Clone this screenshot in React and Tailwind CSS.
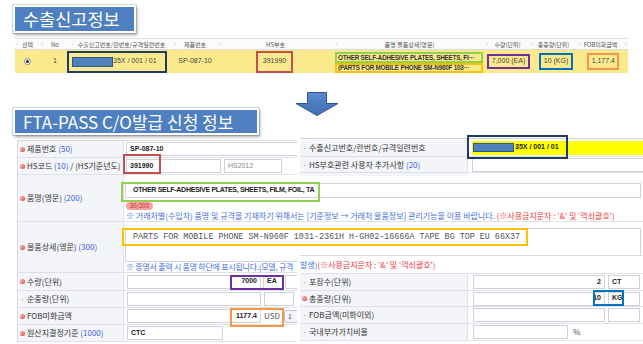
import React from 'react';

const LAT = "font-['Liberation_Sans',sans-serif]";

function TitleBox({ className = '', children }) {
  return (
    <div className={`flex items-center pl-[8px] bg-[#4e7fc0] text-white leading-none border-2 border-white shadow-[1px_2px_3px_rgba(0,0,0,0.35),0_0_0_1px_#d5dbe4] ${className}`}>
      {children}
    </div>
  );
}

function DownArrow() {
  return (
    <svg className="absolute left-[295px] top-[92px]" width="44" height="24" viewBox="0 0 44 24">
      <defs>
        <linearGradient id="ag" x1="0" y1="0" x2="0" y2="1">
          <stop offset="0" stopColor="#5a8ad0" />
          <stop offset="1" stopColor="#3f6fb0" />
        </linearGradient>
      </defs>
      <path d="M12.5 0.5 H31.5 V11.5 H43 L22 23.5 L1 11.5 H12.5 Z" fill="url(#ag)" stroke="#2d5690" strokeWidth="1" />
    </svg>
  );
}

function HeadCell({ w, children }) {
  return (
    <div className={`relative flex items-center justify-center ${w}`}>
      <span className="absolute left-[0px] text-[#b0b0b0] text-[8px] leading-none">·</span>
      <span className="whitespace-nowrap">{children}</span>
    </div>
  );
}

function ExportTable() {
  return (
    <div className="mt-[5px] ml-[15px] w-[613px]">
      <div className="flex h-[12px] border-t border-b border-[#dcdcdc] bg-[#fbfbfb] text-[6px] text-[#555]">
        <HeadCell w="w-[25px]">선택</HeadCell>
        <HeadCell w="w-[30px]">No</HeadCell>
        <HeadCell w="w-[103px]">수출신고번호/란번호/규격일련번호</HeadCell>
        <HeadCell w="w-[44px]">제품번호</HeadCell>
        <HeadCell w="w-[117px]">HS부호</HeadCell>
        <HeadCell w="w-[151px]">품명.물품상세(영문)</HeadCell>
        <HeadCell w="w-[45px]">수량(단위)</HeadCell>
        <HeadCell w="w-[47px]">총중량(단위)</HeadCell>
        <HeadCell w="w-[47px]">FOB미화금액</HeadCell>
        <HeadCell w="w-[4px]"></HeadCell>
      </div>
      <div className={`flex h-[23px] bg-[#fbea8d] text-[7px] text-[#444] ${LAT}`}>
        <div className="w-[25px] flex items-center justify-center">
          <div className="w-[7px] h-[7px] rounded-full border border-[#888] bg-white flex items-center justify-center">
            <div className="w-[3px] h-[3px] rounded-full bg-[#222]" />
          </div>
        </div>
        <div className="w-[30px] flex items-center justify-center">1</div>
        <div className="w-[103px] flex items-center">
          <div className="ml-[-3px] w-[100px] h-[22px] border-2 border-[#1f3a68] flex items-center pl-[3px]">
            <div className="w-[41px] h-[10px] bg-[#4f81bd] border border-[#30578a]" />
            <span className="whitespace-nowrap">35X / 001 / 01</span>
          </div>
        </div>
        <div className="w-[44px] flex items-center justify-center">SP-087-10</div>
        <div className="w-[117px] flex items-center">
          <div className="ml-[39px] w-[37px] h-[22px] border-2 border-[#c0504d] flex items-center justify-center">391990</div>
        </div>
        <div className="w-[151px] flex flex-col pt-[2px] font-bold text-[6.3px] text-[#333] tracking-[-0.2px]">
          <div className="ml-[1px] w-[148px] h-[11px] border-2 border-[#92d050] flex items-center pl-[1px] whitespace-nowrap overflow-hidden">OTHER SELF-ADHESIVE PLATES, SHEETS, FI···</div>
          <div className="ml-[1px] w-[148px] h-[11px] border-2 border-[#ffc000] flex items-center pl-[1px] whitespace-nowrap overflow-hidden">(PARTS FOR MOBILE PHONE SM-N960F 103···</div>
        </div>
        <div className="w-[45px] flex items-center">
          <div className="ml-[2px] w-[43px] h-[15px] border-2 border-[#7030a0] flex items-center justify-center whitespace-nowrap">7,000 (EA)</div>
        </div>
        <div className="w-[47px] flex items-center">
          <div className="ml-[9px] w-[34px] h-[17px] border-2 border-[#0070c0] flex items-center justify-center whitespace-nowrap">10 (KG)</div>
        </div>
        <div className="w-[47px] flex items-center">
          <div className="ml-[10px] w-[32px] h-[17px] border-2 border-[#f79646] flex items-center justify-end pr-[2px]">1,177.4</div>
        </div>
        <div className="w-[4px]" />
      </div>
    </div>
  );
}

function Bullet({ req }) {
  if (req) {
    return <span className="inline-block w-[5px] h-[5px] mr-[2px] shrink-0 rounded-full bg-[radial-gradient(circle_at_35%_35%,#f8b0b0,#d8393b)]" />;
  }
  return <span className="inline-block w-[5px] mr-[2px] shrink-0 text-center text-[#999]">·</span>;
}

function Num({ children }) {
  return <span className="text-[#3b5ce0]">{children}</span>;
}

function Field({ className = '', children }) {
  return (
    <div className={`h-[14px] shrink-0 border border-[#cdd2d9] bg-white flex items-center px-[3px] text-[7px] font-bold text-[#222] whitespace-nowrap ${LAT} ${className}`}>
      {children}
    </div>
  );
}

function Row({ h, req, label, labelW = 'w-[106px]', className = '', children }) {
  return (
    <div className={`flex ${h} border-b border-[#dde1e7]`}>
      <div className={`${labelW} shrink-0 flex items-center pl-[2px] bg-[#f3f5f8] border-r border-[#dde1e7] text-[8px] text-[#333]`}>
        <Bullet req={req} />
        <span className="whitespace-nowrap">{label}</span>
      </div>
      <div className={`relative flex-1 ${className}`}>{children}</div>
    </div>
  );
}

function Mark({ className }) {
  return <div className={`absolute pointer-events-none border-2 ${className}`} />;
}

function FtaForm() {
  return (
    <div className="mt-[5px] ml-[17px] w-[626px] border-t border-l border-[#d6dbe2]">
      <Row h="h-[17px]" req label={<>제품번호 <Num>(50)</Num></>} className="flex items-center pl-[2px]">
        <Field className="w-[320px]">SP-087-10</Field>
      </Row>
      <Row h="h-[17px]" req label={<>HS코드 <Num>(10)</Num> / (HS기준년도)</>} className="flex items-center pl-[2px]">
        <Field className="w-[95px]">391990</Field>
        <Field className="w-[58px] ml-[3px] bg-[#eeeeee] font-normal text-[#888]">HS2012</Field>
        <Mark className="left-[-1px] top-[-4px] w-[38px] h-[20px] border-[#c0504d]" />
      </Row>
      <Row h="h-[47px]" req label={<>품명(영문) <Num>(200)</Num></>} className="flex flex-col pt-[8px] pl-[1px]">
        <div className={`relative h-[18px] w-[516px] border border-[#d0d5dc] flex items-center pl-[7px] text-[7px] font-bold text-[#222] tracking-[-0.3px] whitespace-nowrap ${LAT}`}>
          OTHER SELF-ADHESIVE PLATES, SHEETS, FILM, FOIL, TA
          <Mark className="left-[-5px] top-[-2px] w-[199px] h-[20px] border-[#92d050]" />
        </div>
        <div className="mt-[4px] ml-[1px] w-[27px] h-[8px] rounded-full bg-[#f7a3a3] text-[#b52a2a] text-[6px] leading-[8px] text-center">50/200</div>
        <div className="mt-[1px] ml-[1px] text-[8px] leading-[10px] whitespace-nowrap">
          <span className="text-[#3f6fdc]">※ 거래처별(수입자) 품명 및 규격을 기재하기 위해서는 [기준정보 → 거래처 물품정보] 관리기능을 이용 바랍니다. </span>
          <span className="text-[#f03a3a]">(※사용금지문자 : '&' 및 '꺽쇠괄호')</span>
        </div>
      </Row>
      <Row h="h-[51px]" req label={<>물품상세(영문) <Num>(300)</Num></>} className="flex flex-col pt-[6px] pl-[1px]">
        <div className="relative h-[34px] w-[516px] border border-[#d0d5dc]">
          <div className="h-[16px] flex items-center pl-[7px] font-['Liberation_Mono',monospace] text-[8.4px] text-[#555] whitespace-nowrap">
            PARTS FOR MOBILE PHONE SM-N960F 1031-2361H H-GH02-16666A TAPE BG TOP EU 66X37
          </div>
          <Mark className="left-[-4px] top-[-1px] w-[406px] h-[18px] border-[#ffc000]" />
        </div>
        <div className="ml-[1px] text-[8px] leading-[10px] tracking-[-0.25px] whitespace-nowrap text-[#3f6fdc]">
          ※ 증명서 출력 시 품명 하단에 표시됩니다.(모델, 규격
        </div>
      </Row>
      <Row h="h-[18px]" req label="수량(단위)" className="flex items-center pl-[3px]">
        <Field className="w-[134px] justify-end">7000</Field>
        <Field className="w-[20px] ml-[2px]">EA</Field>
        <Field className="w-[60px] ml-[2px]" />
        <Mark className="left-[106px] top-[2px] w-[54px] h-[15px] border-[#7030a0]" />
      </Row>
      <Row h="h-[17px]" label="순중량(단위)" className="flex items-center pl-[3px]">
        <Field className="w-[134px]" />
        <Field className="w-[30px] ml-[3px]" />
      </Row>
      <Row h="h-[17px]" req label="FOB미화금액" className="flex items-center pl-[3px]">
        <Field className="w-[134px] justify-end">1177.4</Field>
        <span className="ml-[3px] text-[8px] text-[#555]">USD</span>
        <div className="ml-[4px] h-[13px] w-[24px] rounded-[3px] border border-[#b9c3d0] bg-[#f3f6fa] text-[7px] text-[#555] pl-[3px] leading-[11px]">1</div>
        <Mark className="left-[106px] top-[0px] w-[54px] h-[19px] border-[#f79646]" />
      </Row>
      <Row h="h-[17px]" req label={<>원산지결정기준 <Num>(1000)</Num></>} className="flex items-center pl-[3px]">
        <Field className="w-[96px]">CTC</Field>
      </Row>
    </div>
  );
}

function RightTopPanel() {
  return (
    <div className="absolute left-[297px] top-[138px] w-[346px] h-[38px] bg-white pl-[3px]">
      <div className="border-t border-[#cfd4db]">
        <Row h="h-[18px]" labelW="w-[168px]" label="수출신고번호/란번호/규격일련번호" className="flex items-center pl-[4px]">
          <div className={`h-[14px] w-[175px] bg-[#ffff00] flex items-center pl-[1px] text-[7px] font-bold text-[#222] ${LAT}`}>
            <div className="w-[41px] h-[9px] bg-[#4f81bd] border border-[#30578a]" />
            <span className="ml-[1px] whitespace-nowrap">35X / 001 / 01</span>
          </div>
        </Row>
        <Row h="h-[16px]" labelW="w-[168px]" label={<>HS부호관련 사용자 추가사항 <Num>(20)</Num></>} className="flex items-center pl-[4px]">
          <Field className="w-[175px]" />
        </Row>
        <div className="flex h-[3px]">
          <div className="w-[168px] bg-[#f3f5f8]" />
        </div>
      </div>
      <Mark className="left-[170px] top-[-3px] w-[101px] h-[24px] border-[#1f3a68]" />
    </div>
  );
}

function RightBottomPanel() {
  return (
    <div className="absolute left-[297px] top-[255px] w-[346px] h-[89px] bg-white pl-[3px]">
      <div className="border-t border-[#d6dbe2]">
        <div className="h-[17px] flex items-center text-[8px] whitespace-nowrap">
          <span className="text-[#3f6fdc]">발생) </span>
          <span className="text-[#f03a3a]">(※사용금지문자 : '&' 및 '꺽쇠괄호')</span>
        </div>
        <div className="border-t border-[#dde1e7]">
          <Row h="h-[17px]" labelW="w-[168px]" label="포장수(단위)" className="flex items-center pl-[5px]">
            <Field className="w-[132px] justify-end">2</Field>
            <Field className="w-[32px] ml-[3px]">CT</Field>
          </Row>
          <Row h="h-[16px]" labelW="w-[168px]" req label="총중량(단위)" className="flex items-center pl-[5px]">
            <Field className="w-[132px] justify-end">10</Field>
            <Field className="w-[32px] ml-[3px]">KG</Field>
          </Row>
          <Row h="h-[17px]" labelW="w-[168px]" label="FOB금액(미화이외)" className="flex items-center pl-[5px]">
            <Field className="w-[132px]" />
            <Field className="w-[32px] ml-[3px]" />
          </Row>
          <Row h="h-[17px]" labelW="w-[168px]" label="국내부가가치비율" className="flex items-center pl-[5px]">
            <Field className="w-[95px]" />
            <span className="ml-[5px] text-[8px] text-[#555]">%</span>
          </Row>
        </div>
      </div>
      <Mark className="left-[296px] top-[35px] w-[31px] h-[16px] border-[#0070c0]" />
    </div>
  );
}

export default function App() {
  return (
    <div className="relative w-[643px] h-[344px] overflow-hidden bg-white font-['Noto_Sans_CJK_KR',sans-serif] text-[#333]">
      <div className="pt-[5px] pl-[13px]">
        <TitleBox className="w-[123px] h-[28px] text-[17.5px]">수출신고정보</TitleBox>
      </div>
      <ExportTable />
      <DownArrow />
      <div className="mt-[35px] pl-[13px]">
        <TitleBox className="w-[246px] h-[27px] text-[17px]">FTA-PASS C/O발급 신청 정보</TitleBox>
      </div>
      <FtaForm />
      <RightTopPanel />
      <RightBottomPanel />
    </div>
  );
}
